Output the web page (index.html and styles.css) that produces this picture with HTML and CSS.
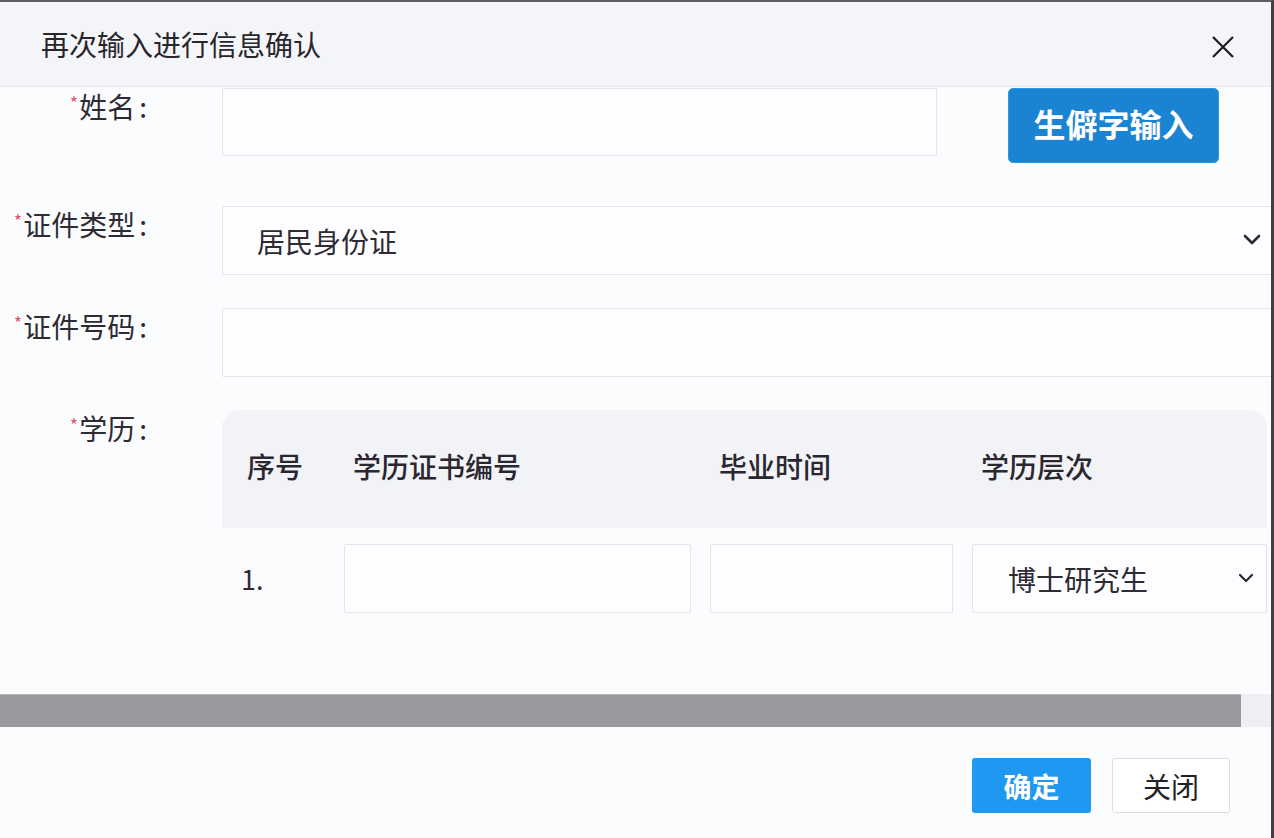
FILE: index.html
```
<!DOCTYPE html>
<html lang="zh-CN">
<head>
<meta charset="utf-8">
<title>再次输入进行信息确认</title>
<link rel="stylesheet" href="styles.css">
</head>
<body>
<div class="dialog">
  <div class="dlg-header">
    <span class="title">再次输入进行信息确认</span>
    <span class="close">
      <svg width="24" height="24" viewBox="0 0 24 24"><path d="M2 2 L22 22 M22 2 L2 22" stroke="#1c1b1f" stroke-width="2.2" fill="none"/></svg>
    </span>
  </div>
  <div class="dlg-body">
    <div class="scroll-area">
      <div class="form-row row-name">
        <label class="lbl"><span class="req">*</span>姓名<span class="colon">:</span></label>
        <div class="ctrl">
          <div class="input name-input"></div>
          <div class="btn-rare">生僻字输入</div>
        </div>
      </div>
      <div class="form-row">
        <label class="lbl"><span class="req">*</span>证件类型<span class="colon">:</span></label>
        <div class="ctrl">
          <div class="input select wide">
            <span class="val">居民身份证</span>
            <svg class="chev" width="18" height="12" viewBox="0 0 18 12"><path d="M2 2 L9 9 L16 2" stroke="#2a2830" stroke-width="2.6" fill="none" stroke-linecap="round" stroke-linejoin="round"/></svg>
          </div>
        </div>
      </div>
      <div class="form-row">
        <label class="lbl"><span class="req">*</span>证件号码<span class="colon">:</span></label>
        <div class="ctrl">
          <div class="input wide"></div>
        </div>
      </div>
      <div class="form-row row-edu">
        <label class="lbl"><span class="req">*</span>学历<span class="colon">:</span></label>
        <div class="ctrl">
          <div class="edu-table">
            <div class="edu-head">
              <div class="th th-first">序号</div>
              <div class="th">学历证书编号</div>
              <div class="th">毕业时间</div>
              <div class="th">学历层次</div>
            </div>
            <div class="edu-row">
              <div class="td-num">1.</div>
              <div class="input cell"></div>
              <div class="input cell"></div>
              <div class="input cell select small">
                <span class="val">博士研究生</span>
                <svg class="chev-sm" width="16" height="10" viewBox="0 0 16 10"><path d="M2 2 L8 8 L14 2" stroke="#2a2830" stroke-width="2.2" fill="none" stroke-linecap="round" stroke-linejoin="round"/></svg>
              </div>
            </div>
          </div>
        </div>
      </div>
    </div>
    <div class="hscroll"><div class="thumb"></div></div>
  </div>
  <div class="dlg-footer">
    <div class="btn btn-primary">确定</div>
    <div class="btn btn-default">关闭</div>
  </div>
</div>
</body>
</html>
```
FILE: styles.css
```
html, body {
  margin: 0;
  padding: 0;
}
body {
  width: 1274px;
  height: 838px;
  overflow: hidden;
  background: #fbfcfe;
  font-family: "Noto Sans CJK SC", "Noto Sans", sans-serif;
  color: #2e2b33;
}
.dialog {
  box-sizing: border-box;
  width: 1274px;
  height: 838px;
  border-top: 2px solid #5e5c60;
  border-right: 3px solid #433f47;
  background: #fbfcfe;
  display: flex;
  flex-direction: column;
  overflow: hidden;
}
.dlg-header {
  height: 84px;
  flex: none;
  background: #f4f5f8;
  border-bottom: 1px solid #e6e7eb;
  display: flex;
  align-items: center;
  justify-content: space-between;
  padding: 0 36px 0 41px;
}
.title {
  font-size: 28px;
  line-height: 1;
  color: #28252d;
  margin-top: 0;
}
.close {
  display: flex;
  width: 24px;
  height: 24px;
  margin-top: 6px;
}
.dlg-body {
  flex: none;
  height: 640px;
  display: flex;
  flex-direction: column;
}
.scroll-area {
  flex: 1;
  overflow: hidden;
  padding-top: 1px;
}
.form-row {
  display: grid;
  grid-template-columns: 150px 1fr;
  column-gap: 72px;
  margin-bottom: 33px;
}
.row-name {
  margin-bottom: 43px;
}
.lbl {
  text-align: right;
  font-size: 28px;
  line-height: 40px;
  margin-top: -6px;
  padding-right: 3px;
  color: #2e2b33;
  white-space: nowrap;
}
.colon {
  margin-left: 4px;
}
.req {
  color: #e0566c;
  font-size: 18px;
  vertical-align: 8px;
  margin-right: 1px;
}
.ctrl {
  display: flex;
  align-items: flex-start;
  min-width: 0;
}
.input {
  box-sizing: border-box;
  height: 69px;
  background: #fdfdff;
  border: 1px solid #e2e4e9;
  border-radius: 2px;
}
.name-input {
  width: 715px;
  height: 68px;
}
.btn-rare {
  margin-left: 71px;
  width: 211px;
  height: 75px;
  box-sizing: border-box;
  background: #1b84d2;
  border: 1px solid #2a9ae8;
  border-radius: 5px;
  color: #fff;
  font-weight: 700;
  font-size: 32px;
  display: flex;
  align-items: center;
  justify-content: center;
  padding-bottom: 6px;
}
.wide {
  flex: none;
  width: 1060px;
}
.select {
  display: flex;
  align-items: center;
  justify-content: space-between;
}
.select.wide {
  padding: 0 0 0 34px;
}
.val {
  font-size: 28px;
  color: #2e2b33;
}
.chev {
  margin-right: 20px;
  margin-top: -2px;
}
.edu-table {
  width: 1045px;
  flex: none;
}
.edu-head {
  height: 118px;
  background: #f2f3f6;
  border-radius: 18px 18px 0 0;
  display: grid;
  grid-template-columns: 103px 347px 243px 295px;
  column-gap: 19px;
  align-items: center;
}
.th {
  font-size: 28px;
  font-weight: 500;
  color: #2a2730;
  padding-left: 9px;
  white-space: nowrap;
  margin-top: -6px;
}
.th-first {
  padding-left: 25px;
}
.edu-row {
  margin-top: 16px;
  display: grid;
  grid-template-columns: 103px 347px 243px 295px;
  column-gap: 19px;
  align-items: center;
}
.td-num {
  font-size: 27px;
  padding-left: 19px;
  color: #2e2b33;
}
.cell {
  width: auto;
}
.select.small {
  padding: 0 12px 0 35px;
}
.chev-sm {
  margin-top: -2px;
}
.hscroll {
  height: 33px;
  flex: none;
  background: #eeeff2;
  display: flex;
}
.thumb {
  width: 1241px;
  height: 33px;
  background: #98989d;
  border-top: 1px solid #b5b5b8;
  box-sizing: border-box;
}
.dlg-footer {
  flex: 1;
  background: #fbfcfe;
  display: flex;
  justify-content: flex-end;
  align-items: flex-start;
  padding: 31px 41px 0 0;
  gap: 21px;
}
.btn {
  box-sizing: border-box;
  height: 55px;
  border-radius: 3px;
  display: flex;
  align-items: center;
  justify-content: center;
  font-size: 28px;
}
.btn-primary {
  width: 119px;
  background: #1e98f1;
  color: #fff;
  font-weight: 700;
}
.btn-default {
  width: 118px;
  background: #fff;
  border: 1px solid #dcdee3;
  color: #222;
}
```
